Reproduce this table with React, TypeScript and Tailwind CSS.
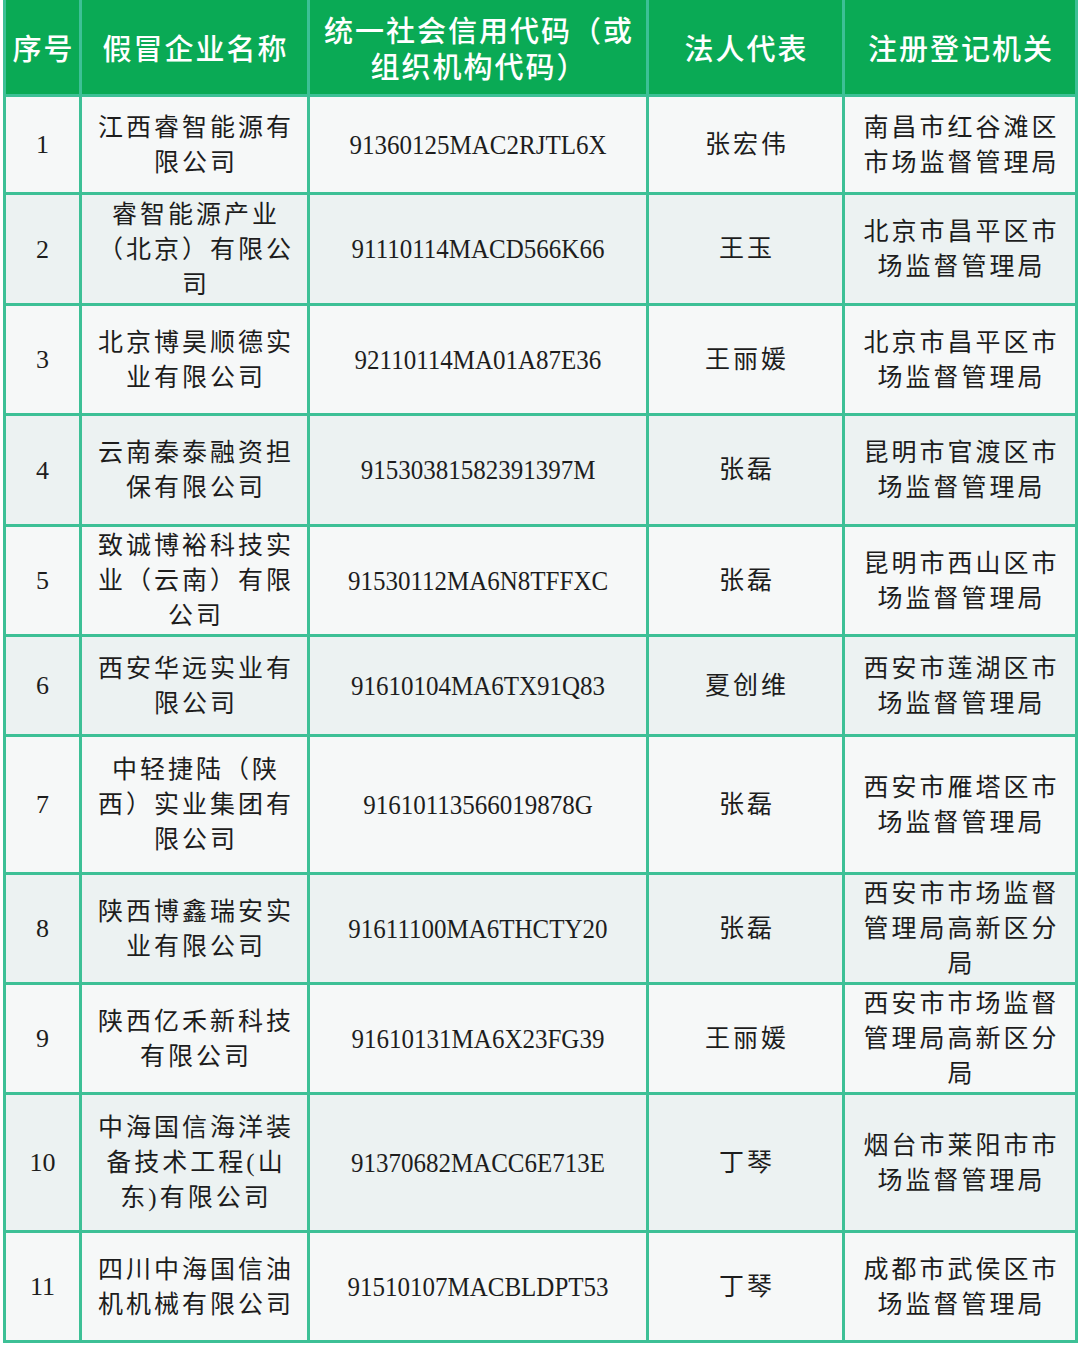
import React from "react";

type Row = {
  no: string;
  name: string[];
  code: string;
  person: string;
  office: string[];
};

const rows: Row[] = [
  { no: "1", name: ["江西睿智能源有", "限公司"], code: "91360125MAC2RJTL6X", person: "张宏伟", office: ["南昌市红谷滩区", "市场监督管理局"] },
  { no: "2", name: ["睿智能源产业", "（北京）有限公", "司"], code: "91110114MACD566K66", person: "王玉", office: ["北京市昌平区市", "场监督管理局"] },
  { no: "3", name: ["北京博昊顺德实", "业有限公司"], code: "92110114MA01A87E36", person: "王丽媛", office: ["北京市昌平区市", "场监督管理局"] },
  { no: "4", name: ["云南秦泰融资担", "保有限公司"], code: "91530381582391397M", person: "张磊", office: ["昆明市官渡区市", "场监督管理局"] },
  { no: "5", name: ["致诚博裕科技实", "业（云南）有限", "公司"], code: "91530112MA6N8TFFXC", person: "张磊", office: ["昆明市西山区市", "场监督管理局"] },
  { no: "6", name: ["西安华远实业有", "限公司"], code: "91610104MA6TX91Q83", person: "夏创维", office: ["西安市莲湖区市", "场监督管理局"] },
  { no: "7", name: ["中轻捷陆（陕", "西）实业集团有", "限公司"], code: "91610113566019878G", person: "张磊", office: ["西安市雁塔区市", "场监督管理局"] },
  { no: "8", name: ["陕西博鑫瑞安实", "业有限公司"], code: "91611100MA6THCTY20", person: "张磊", office: ["西安市市场监督", "管理局高新区分", "局"] },
  { no: "9", name: ["陕西亿禾新科技", "有限公司"], code: "91610131MA6X23FG39", person: "王丽媛", office: ["西安市市场监督", "管理局高新区分", "局"] },
  { no: "10", name: ["中海国信海洋装", "备技术工程(山", "东)有限公司"], code: "91370682MACC6E713E", person: "丁琴", office: ["烟台市莱阳市市", "场监督管理局"] },
  { no: "11", name: ["四川中海国信油", "机机械有限公司"], code: "91510107MACBLDPT53", person: "丁琴", office: ["成都市武侯区市", "场监督管理局"] },
];

const cjk = "font-['Liberation_Serif','Noto_Sans_CJK_SC',serif]";

function Lines({ lines }: { lines: string[] }) {
  return (
    <div className="flex flex-col items-center">
      {lines.map((l, i) => (
        <span key={i} className="block pl-[3px]">
          {l}
        </span>
      ))}
    </div>
  );
}

export default function App() {
  return (
    <div className="w-[1080px] h-[1346px] bg-white">
      <div className="ml-[3px] w-[1075px] bg-[#3dc096] px-[3px] pb-[3px] grid grid-cols-[73px_225px_336px_193px_230px] grid-rows-[94px_95px_108px_107px_108px_107px_97px_135px_107px_107px_135px_107px] gap-[3px]">
        {/* 表头 */}
        {[["序号"], ["假冒企业名称"], ["统一社会信用代码（或", "组织机构代码）"], ["法人代表"], ["注册登记机关"]].map((h, i) => (
          <div
            key={i}
            className="bg-[#0aaa55] flex items-center justify-center text-center text-white font-['Noto_Sans_CJK_SC',sans-serif] font-medium text-[29px] leading-[36px] tracking-[2px]"
          >
            <div className="flex flex-col items-center">
              {h.map((l, j) => (
                <span key={j} className="block pl-[2px]">
                  {l}
                </span>
              ))}
            </div>
          </div>
        ))}

        {rows.map((r, i) => {
          const bg = i % 2 === 0 ? "bg-[#f6f8f8]" : "bg-[#ecf2f2]";
          return (
            <React.Fragment key={r.no}>
              <div className={`${bg} flex items-center justify-center text-[26px] text-[#1d1d1d] font-['Liberation_Serif',serif]`}>
                {r.no}
              </div>
              <div className={`${bg} flex items-center justify-center text-center text-[25px] leading-[35px] tracking-[3px] text-[#1d1d1d] ${cjk}`}>
                <Lines lines={r.name} />
              </div>
              <div className={`${bg} flex items-center justify-center text-[25px] text-[#1d1d1d] font-['Liberation_Serif',serif]`}>
                <span className="inline-block scale-y-[1.1]">{r.code}</span>
              </div>
              <div className={`${bg} flex items-center justify-center text-center text-[25px] tracking-[3px] text-[#1d1d1d] ${cjk}`}>
                <span className="pl-[3px]">{r.person}</span>
              </div>
              <div className={`${bg} flex items-center justify-center text-center text-[25px] leading-[35px] tracking-[3px] text-[#1d1d1d] ${cjk}`}>
                <Lines lines={r.office} />
              </div>
            </React.Fragment>
          );
        })}
      </div>
    </div>
  );
}
